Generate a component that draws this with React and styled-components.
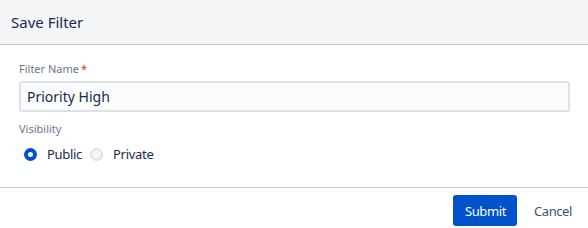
import React, { useState } from 'react';
import styled, { createGlobalStyle } from 'styled-components';

const GlobalStyle = createGlobalStyle`
    body {
        margin: 0;
        background: #fff;
        font-family: "Noto Sans", "Open Sans", sans-serif;
        color: #172b4d;
    }
`;

const Dialog = styled.div`
    width: 588px;
    height: 228px;
    display: flex;
    flex-direction: column;
    background: #fff;
`;

const Header = styled.div`
    height: 45px;
    box-sizing: border-box;
    display: flex;
    align-items: center;
    padding: 0 11px;
    background: #f4f5f7;
    border-bottom: 1px solid #c1c7d0;
`;

const Title = styled.h2`
    margin: 0;
    font-size: 15px;
    font-weight: 400;
    color: #172b4d;
`;

const Body = styled.div`
    flex: 1;
    padding: 16px 18px 0 19px;
    display: flex;
    flex-direction: column;
    border-bottom: 1px solid #c1c7d0;
`;

const Label = styled.label`
    font-size: 11px;
    color: #6b778c;
    line-height: 16px;
    margin-bottom: 4px;
`;

const Required = styled.span`
    color: #de350b;
    margin-left: 2px;
`;

const Input = styled.input`
    box-sizing: border-box;
    width: 551px;
    height: 31px;
    border: 2px solid #dfe1e6;
    border-radius: 3px;
    background: #fafbfc;
    padding: 0 6px;
    font: inherit;
    font-size: 14px;
    color: #172b4d;
    margin-bottom: 9px;
    outline: none;
`;

const RadioGroup = styled.div`
    display: flex;
    align-items: center;
    gap: 8px;
    margin-top: 4px;
`;

const RadioOption = styled.label`
    display: flex;
    align-items: center;
    gap: 10px;
    font-size: 13px;
    letter-spacing: -0.3px;
    color: #172b4d;
    cursor: pointer;
    &:first-child {
        padding-left: 5px;
    }
`;

const RadioDot = styled.span`
    box-sizing: border-box;
    width: 13px;
    height: 13px;
    border-radius: 50%;
    background: ${(p) => (p.checked ? '#fff' : '#f4f5f7')};
    border: ${(p) => (p.checked ? '4px solid #0052cc' : '2px solid #dfe1e6')};
`;

const Footer = styled.div`
    height: 40px;
    display: flex;
    justify-content: flex-end;
    align-items: flex-start;
    gap: 5px;
    padding: 7px 5px 0 0;
    box-sizing: border-box;
`;

const Button = styled.button`
    height: 31px;
    padding: 0 11px 0 12px;
    border: none;
    border-radius: 3px;
    font: inherit;
    font-size: 13px;
    letter-spacing: -0.4px;
    cursor: pointer;
    background: ${(p) => (p.$primary ? '#0052cc' : 'transparent')};
    color: ${(p) => (p.$primary ? '#fff' : '#42526e')};
`;

const App = () => {
    const [visibility, setVisibility] = useState('public');
    return (
        <>
            <GlobalStyle />
            <Dialog>
                <Header>
                    <Title>Save Filter</Title>
                </Header>
                <Body>
                    <Label>
                        Filter Name<Required>*</Required>
                    </Label>
                    <Input defaultValue="Priority High" />
                    <Label>Visibility</Label>
                    <RadioGroup>
                        <RadioOption onClick={() => setVisibility('public')}>
                            <RadioDot checked={visibility === 'public'} />
                            Public
                        </RadioOption>
                        <RadioOption onClick={() => setVisibility('private')}>
                            <RadioDot checked={visibility === 'private'} />
                            Private
                        </RadioOption>
                    </RadioGroup>
                </Body>
                <Footer>
                    <Button $primary>Submit</Button>
                    <Button>Cancel</Button>
                </Footer>
            </Dialog>
        </>
    );
};

export default App;
